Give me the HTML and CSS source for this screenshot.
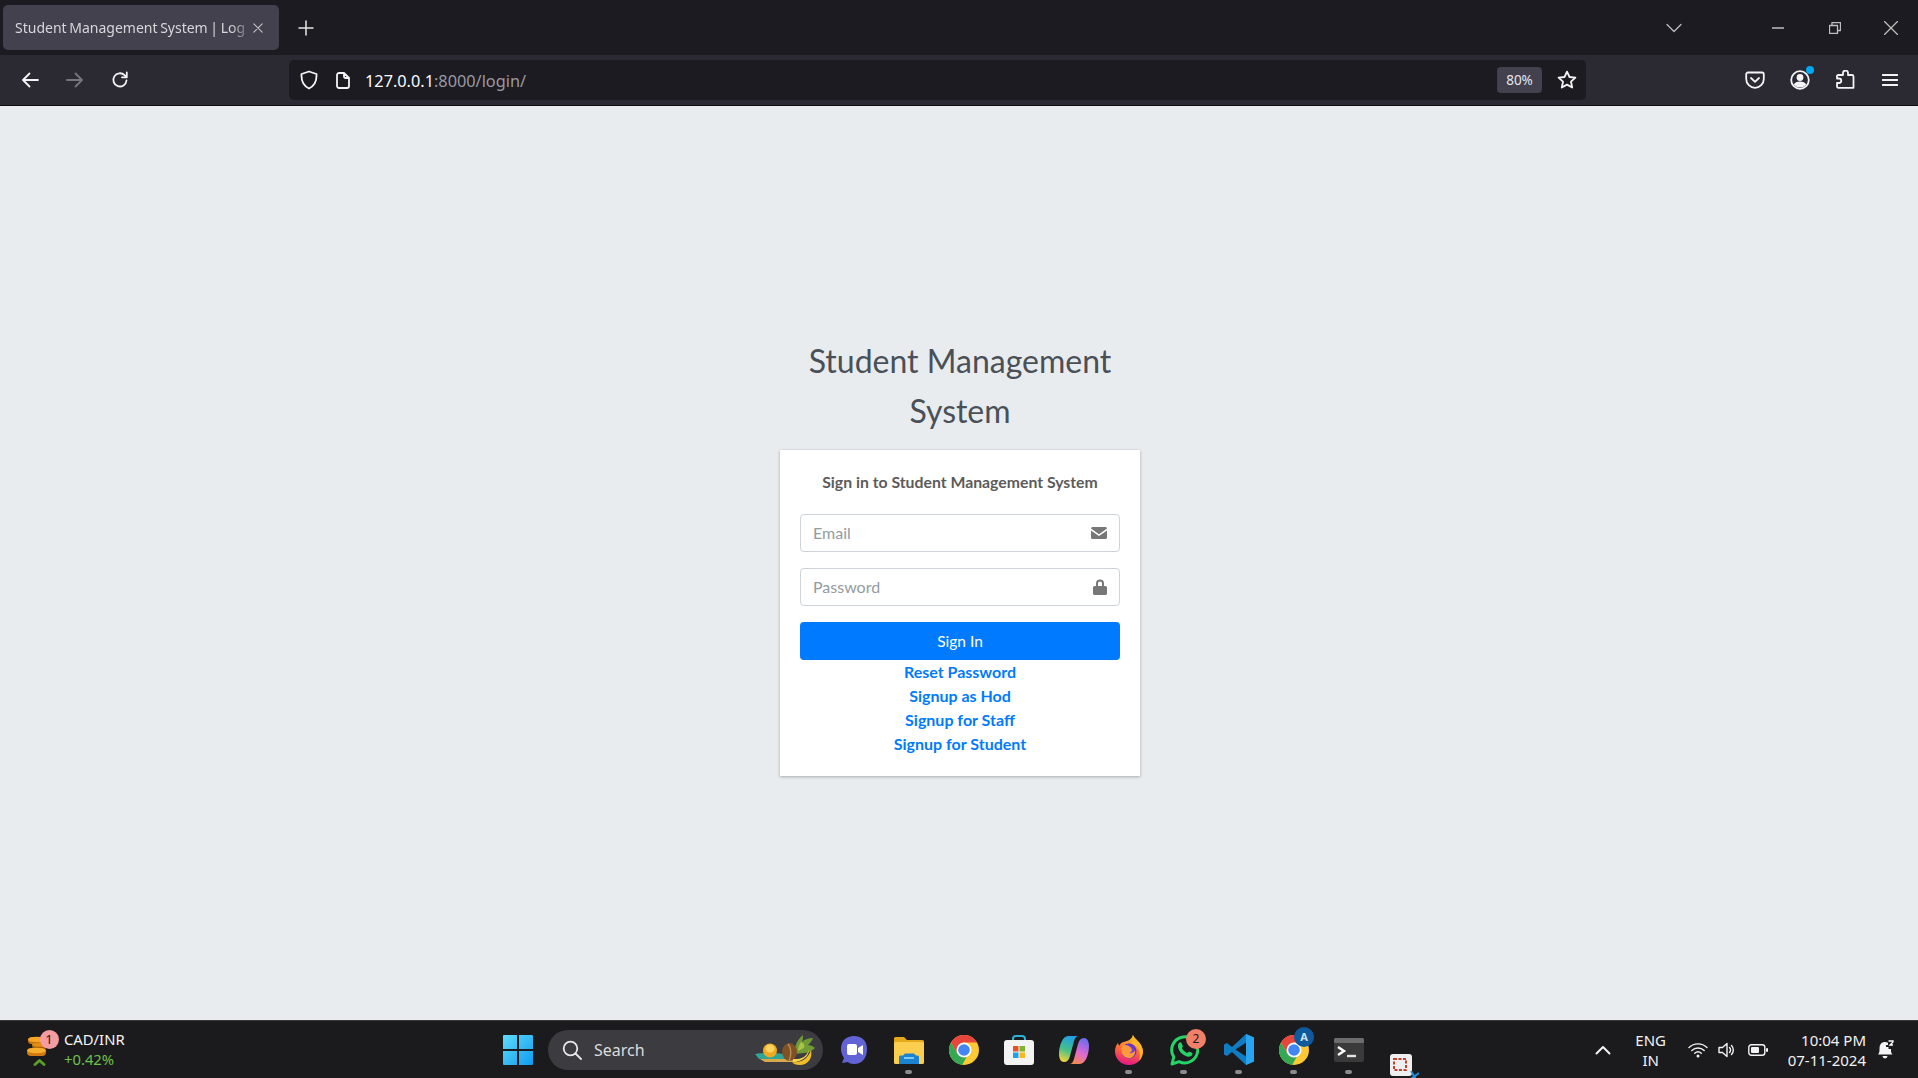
FILE: index.html
```html
<!DOCTYPE html>
<html lang="en">
<head>
<meta charset="utf-8">
<title>Student Management System | Log in</title>
<link rel="stylesheet" href="styles.css">
</head>
<body>
<header class="browser">
  <div class="tabbar">
    <div class="tab">
      <span class="tab-title">Student Management System | Log</span>
      <svg class="tab-close" width="10" height="10" viewBox="0 0 12 12"><path d="M1 1l10 10M11 1L1 11" class="s-tab"/></svg>
    </div>
    <svg class="newtab" width="16" height="16" viewBox="0 0 16 16"><path d="M8 1v14M1 8h14" class="s-white"/></svg>
    <div class="spacer"></div>
    <svg class="tablist" width="16" height="10" viewBox="0 0 16 10"><path d="M1 1.500l7 7 7-7" class="s-grey"/></svg>
    <svg class="win-min" width="12" height="2" viewBox="0 0 12 2"><path d="M0 1h12" class="s-grey"/></svg>
    <svg class="win-max" width="12" height="12" viewBox="0 0 12 12"><path d="M.5 3.500h8v8h-8zM3 3.500V.5h8.500v8H8.500" class="s-grey"/></svg>
    <svg class="win-close" width="14" height="14" viewBox="0 0 14 14"><path d="M.5.5l13 13M13.500.5l-13 13" class="s-grey"/></svg>
  </div>
  <div class="toolbar">
    <div class="navbtn"><svg width="18" height="16" viewBox="0 0 18 16"><path d="M17 8H2M8.500 1.500L2 8l6.500 6.500" class="s-nav"/></svg></div>
    <div class="navbtn"><svg width="18" height="16" viewBox="0 0 18 16"><path d="M1 8h15M9.500 1.500L16 8l-6.500 6.500" class="s-dim"/></svg></div>
    <div class="navbtn"><svg width="18" height="18" viewBox="0 0 18 18"><path d="M15.500 9.500A6.600 6.600 0 1 1 13.600 4.200L15.500 6M15.800 1.500V6.300H11" class="s-nav"/></svg></div>
    <div class="urlbar">
      <svg class="shield" width="18" height="20" viewBox="0 0 18 20"><path d="M9 1.500L16.500 4c.4 6.500-1.500 11.500-7.500 14.500C3 15.500 1.100 10.500 1.500 4z" class="s-nav"/></svg>
      <svg class="doc" width="14" height="17" viewBox="0 0 14 17"><path d="M3 1h5l5 5v8a2 2 0 0 1-2 2H3a2 2 0 0 1-2-2V3a2 2 0 0 1 2-2zM8 1v3.500A1.500 1.500 0 0 0 9.500 6H13" class="s-nav"/></svg>
      <span class="url"><span class="url-host">127.0.0.1</span>:8000/login/</span>
      <span class="zoomlevel">80%</span>
      <svg class="star" width="20" height="20" viewBox="0 0 20 20"><path d="M10 1.600l2.500 5.400 5.900.7-4.400 4 1.200 5.800-5.200-2.900-5.200 2.900 1.200-5.800-4.400-4 5.900-.7z" class="s-nav"/></svg>
    </div>
    <div class="tools">
      <div class="toolbtn"><svg width="20" height="18" viewBox="0 0 20 18"><path d="M3 1.500h14a1.800 1.800 0 0 1 1.800 1.800V8A8.800 8.800 0 0 1 1.200 8V3.300A1.800 1.800 0 0 1 3 1.500zM6 7l4 3.800L14 7" class="s-nav"/></svg></div>
      <div class="toolbtn account"><svg width="20" height="20" viewBox="0 0 20 20"><circle cx="10" cy="10" r="8.800" class="s-nav"/><circle cx="10" cy="7.500" r="3.400" class="f-white"/><path d="M3.800 14.500c1-2 3-3 6.200-3s5.200 1 6.200 3c-1.500 2-3.500 3-6.200 3s-4.700-1-6.200-3z" class="f-white"/></svg><span class="account-dot"></span></div>
      <div class="toolbtn"><svg width="20" height="20" viewBox="0 0 20 20"><path d="M8 3.500V3a2.500 2.500 0 0 1 5 0v2h4a1.500 1.500 0 0 1 1.500 1.500v11.300H3.500a1.500 1.500 0 0 1-1.500-1.500V13h2a2 2 0 0 0 0-4.500H2V7a1.500 1.500 0 0 1 1.500-2H8z" class="s-nav"/></svg></div>
      <div class="toolbtn"><svg width="16" height="12" viewBox="0 0 16 12"><path d="M.5 1h15M.5 6h15M.5 11h15" class="s-nav"/></svg></div>
    </div>
  </div>
</header>

<main class="page">
  <div class="login-box">
    <h1 class="login-logo">Student Management System</h1>
    <section class="card">
      <p class="login-msg">Sign in to Student Management System</p>
      <form>
        <label class="field">
          <input class="field-input" type="email" placeholder="Email">
          <svg class="field-icon" width="16" height="12" viewBox="0 0 16 12"><path d="M1.500 0h13A1.500 1.500 0 0 1 16 1.500L8 7.200 0 1.500A1.500 1.500 0 0 1 1.500 0zM0 3.400l8 5.700 8-5.700v7.100a1.500 1.500 0 0 1-1.500 1.500h-13A1.500 1.500 0 0 1 0 10.500z"/></svg>
        </label>
        <label class="field">
          <input class="field-input" type="password" placeholder="Password">
          <svg class="field-icon" width="14" height="16" viewBox="0 0 14 16"><path fill-rule="evenodd" d="M3 7V4.500a4 4 0 0 1 8 0V7h1.500A1.500 1.500 0 0 1 14 8.500v6a1.500 1.500 0 0 1-1.500 1.500h-11A1.500 1.500 0 0 1 0 14.500v-6A1.500 1.500 0 0 1 1.500 7zm2 0h4V4.500a2 2 0 0 0-4 0z"/></svg>
        </label>
        <button class="signin" type="button">Sign In</button>
      </form>
      <nav class="links">
        <a href="#">Reset Password</a>
        <a href="#">Signup as Hod</a>
        <a href="#">Signup for Staff</a>
        <a href="#">Signup for Student</a>
      </nav>
    </section>
  </div>
</main>

<footer class="taskbar">
  <div class="widget">
    <div class="widget-icon">
      <svg width="30" height="40" viewBox="0 0 30 40">
        <rect x="4" y="7" width="18" height="7" rx="3.500" fill="#c8730f"/>
        <ellipse cx="13" cy="9.500" rx="9" ry="2.800" fill="#f6a623"/>
        <rect x="8" y="12" width="15" height="7" rx="3.500" fill="#a95e0a"/>
        <ellipse cx="15.500" cy="14.500" rx="7.500" ry="2.300" fill="#e38c14"/>
        <rect x="3" y="18" width="19" height="8" rx="4" fill="#d07a10"/>
        <ellipse cx="12.500" cy="20.500" rx="9.500" ry="2.800" fill="#f8ae2d"/>
        <path d="M11 34.500l4.500-4 4.500 4" class="s-up"/>
      </svg>
      <span class="widget-badge">1</span>
    </div>
    <div class="widget-text">
      <span class="pair">CAD/INR</span>
      <span class="change">+0.42%</span>
    </div>
  </div>

  <div class="center">
    <svg class="start" width="30" height="30" viewBox="0 0 30 30">
      <defs><linearGradient id="w" x1="0" y1="0" x2="1" y2="1"><stop offset="0" stop-color="#5fdcfa"/><stop offset="1" stop-color="#0f9bef"/></linearGradient></defs>
      <path d="M0 1a1 1 0 0 1 1-1h13v14H0zM16 0h13a1 1 0 0 1 1 1v13H16zM0 16h14v14H1a1 1 0 0 1-1-1zM16 16h14v13a1 1 0 0 1-1 1H16z" fill="url(#w)"/>
    </svg>
    <div class="search">
      <svg width="20" height="20" viewBox="0 0 20 20"><circle cx="8.500" cy="8.500" r="6.800" class="s-search"/><path d="M13.500 13.500L19 19" class="s-search"/></svg>
      <span class="search-label">Search</span>
      <svg class="search-art" width="60" height="30" viewBox="0 0 60 30">
        <path d="M0 19c6-1.500 22-1.500 30 0v5H4z" fill="#2fa597"/>
        <path d="M5 24h38l-2 3H10z" fill="#d9a84a"/>
        <circle cx="15" cy="15.500" r="7" fill="#f0a91f"/>
        <ellipse cx="15" cy="13.500" rx="4.500" ry="4" fill="#f8d45e"/>
        <path d="M40 19C39 10 43 4 48 0c0 3 0 5-1 7 3-3 7-4 11-4-1 3-3 5-5 7 2 0 5 1 7 3-3 3-7 5-11 5z" fill="#6f9a34"/>
        <path d="M46 7c-2 3-3 6-3 9l6-3c1-3 0-5-3-6z" fill="#a8c24a"/>
        <ellipse cx="34.500" cy="17" rx="7.500" ry="9" fill="#7f5126"/>
        <path d="M33 9c3 3 4 11 1 17" fill="none" stroke="#b98a50" stroke-width="1.500"/>
        <path d="M37 27c7 1 16-2 19-12 2 8-3 15-11 15-4 0-7-1-8-3z" fill="#f0bd28"/>
        <path d="M38 24c6 1 13-1 16-9 0 6-7 12-16 12z" fill="#f8d64e"/>
      </svg>
    </div>
    <div class="dock">
      <div class="app"><svg width="30" height="30" viewBox="0 0 30 30"><path d="M15 1c8 0 13 5 13 13 0 9-5 15-13 15-3 0-5-1-6-2l-6 1 2-5c-2-3-3-6-3-9C2 6 7 1 15 1z" fill="#6264d6"/><rect x="8" y="9" width="10" height="11" rx="2" fill="#fff"/><path d="M19 13l5-3v10l-5-3z" fill="#fff"/></svg></div>
      <div class="app running"><svg width="30" height="28" viewBox="0 0 30 28"><path d="M0 2.500A1.500 1.500 0 0 1 1.500 1h8.500l3 3h15.500A1.500 1.500 0 0 1 30 5.500V10H0z" fill="#e3a81c"/><rect y="6" width="30" height="22" rx="1.500" fill="#fbce4f"/><path d="M5 28v-7a1.500 1.500 0 0 1 1.500-1.500H9l2-2h9l2 2h1.500A1.500 1.500 0 0 1 25 21v7z" fill="#1b84d2"/><rect x="10" y="21" width="10" height="2" fill="#7fcaf2"/></svg></div>
      <div class="app"><svg width="30" height="30" viewBox="0 0 30 30"><circle cx="15" cy="15" r="15" fill="#fcc934"/><path d="M15 15L8.500 18.750 2 7.500A15 15 0 0 1 28 7.500H15z" fill="#e8453c"/><path d="M2 7.500A15 15 0 0 0 13.100 29.900L19.500 18.750 15 15 8.500 18.750z" fill="#34a853"/><circle cx="15" cy="15" r="7.500" fill="#fff"/><circle cx="15" cy="15" r="5.800" fill="#4285f4"/></svg></div>
      <div class="app"><svg width="30" height="30" viewBox="0 0 30 30"><path d="M9 6V4a3 3 0 0 1 3-3h6a3 3 0 0 1 3 3v2" fill="none" stroke="#2bb2d6" stroke-width="2"/><rect y="5" width="30" height="25" rx="3" fill="#f3f3f3"/><rect x="9" y="11" width="5.500" height="5.500" fill="#e8502b"/><rect x="15.500" y="11" width="5.500" height="5.500" fill="#7db52d"/><rect x="9" y="17.500" width="5.500" height="5.500" fill="#1ea3e6"/><rect x="15.500" y="17.500" width="5.500" height="5.500" fill="#fbb81a"/></svg></div>
      <div class="app"><svg width="30" height="30" viewBox="0 0 30 30"><defs><linearGradient id="c1" x1=".6" y1="0" x2=".3" y2="1"><stop offset="0" stop-color="#1f9fe8"/><stop offset=".55" stop-color="#45c08a"/><stop offset="1" stop-color="#f3d23a"/></linearGradient><linearGradient id="c2" x1=".7" y1="0" x2=".3" y2="1"><stop offset="0" stop-color="#6a6cf0"/><stop offset=".55" stop-color="#e06ad0"/><stop offset="1" stop-color="#f78a4c"/></linearGradient></defs><path d="M9 1H20C17 1 16 3 15 6L11 21C10 25 8 27 5 27 2 27 0 24 0 19 0 10 4 1 9 1Z" fill="url(#c1)"/><path d="M25 3C28 3 30 6 30 11 30 20 26 29 21 29H10C13 29 14 27 15 24L19 9C20 5 22 3 25 3Z" fill="url(#c2)"/></svg></div>
      <div class="app running"><svg width="28" height="30" viewBox="0 0 28 30"><defs><linearGradient id="ff" x1=".6" y1="0" x2=".4" y2="1"><stop offset="0" stop-color="#ffc525"/><stop offset=".5" stop-color="#ff6a39"/><stop offset="1" stop-color="#e31587"/></linearGradient><radialGradient id="fg"><stop offset="0" stop-color="#9059ff"/><stop offset="1" stop-color="#5a2ec0"/></radialGradient></defs><path d="M18 0c1 4 9 7 10 16 0 8-6 14-14 14S0 24 0 16c0-3 1-6 3-8l1 3c1-2 3-4 5-4 4-1 8-3 9-7z" fill="url(#ff)"/><path d="M18 0c1 4 9 7 10 16 0 4-2 8-4 10 2-6 1-14-7-17-1-3 0-6 1-9z" fill="#ffb527"/><circle cx="14" cy="16" r="7.500" fill="url(#fg)"/><path d="M7 11c3-2 6-1 8 1 3 2 2 5-1 6 4 1 6-2 6-3 1 5-3 9-7 8-6-1-8-7-6-12z" fill="#ff9a3c"/></svg></div>
      <div class="app running">
        <svg width="30" height="32" viewBox="0 0 30 32"><path d="M3 30l1.800-7A13 13 0 1 1 10 27.600z" fill="none" stroke="#25d366" stroke-width="3" stroke-linejoin="round"/><path d="M10 9c1-1 2-1 2.500 0l1.300 3c.2.600 0 1-.8 2-.5.500 2.500 4 5 5 .7 0 1.200-1 2-1.500l3 1.300c.7.500.5 2-.5 3-2.500 2-6 1-10-2.500C9 16 8 11 10 9z" fill="#25d366"/></svg>
        <span class="app-badge wa">2</span>
      </div>
      <div class="app running"><svg width="30" height="31" viewBox="0 0 30 31"><path d="M22 0l8 3.500v24L22 31 8 18 3 22 0 20.500V10.500L3 9l5 4z" fill="#0f7cc4"/><path d="M22 0l8 3.500v24L22 31z" fill="#28a5ee"/><path d="M22 8.500L11.500 15.500 22 22.500z" fill="#1b1b1d"/></svg></div>
      <div class="app running">
        <svg width="30" height="30" viewBox="0 0 30 30"><circle cx="15" cy="15" r="15" fill="#fcc934"/><path d="M15 15L8.500 18.750 2 7.500A15 15 0 0 1 28 7.500H15z" fill="#e8453c"/><path d="M2 7.500A15 15 0 0 0 13.100 29.900L19.500 18.750 15 15 8.500 18.750z" fill="#34a853"/><circle cx="15" cy="15" r="7.500" fill="#fff"/><circle cx="15" cy="15" r="5.800" fill="#4285f4"/></svg>
        <span class="app-badge profile">A</span>
      </div>
      <div class="app running"><svg width="30" height="24" viewBox="0 0 30 24"><rect width="30" height="24" rx="2" fill="#3a3a3a"/><rect width="30" height="5" rx="1.500" fill="#6d6d6d"/><path d="M4 9l6 4-6 4" fill="none" stroke="#fff" stroke-width="2.400"/><path d="M13 18h9" stroke="#e4e4e4" stroke-width="2.400"/></svg></div>
      <div class="app snip"><svg width="32" height="28" viewBox="0 0 32 28"><rect width="22" height="22" rx="3" fill="#efefef"/><rect x="4" y="5" width="12" height="11" fill="none" stroke="#c9402c" stroke-width="2" stroke-dasharray="3 1.500"/><path d="M18 27l11-8M21 17l6 10" stroke="#1f8fe0" stroke-width="2" fill="none"/></svg></div>
    </div>
  </div>

  <div class="tray">
    <svg class="tray-chevron" width="16" height="10" viewBox="0 0 16 10"><path d="M1.500 8.500L8 2l6.500 6.500" class="s-tray"/></svg>
    <div class="lang"><span>ENG</span><span>IN</span></div>
    <svg class="tray-wifi" width="20" height="16" viewBox="0 0 20 16"><path d="M1 5.500a13 13 0 0 1 18 0M3.800 8.500a9 9 0 0 1 12.400 0M6.700 11.300a5 5 0 0 1 6.600 0" class="s-thin"/><circle cx="10" cy="14" r="1.500" class="f-white"/></svg>
    <svg class="tray-vol" width="20" height="16" viewBox="0 0 20 16"><path d="M1 5.500h3.500L9 1.500v13l-4.500-4H1zM11.500 5.500a3.500 3.500 0 0 1 0 5M13.500 3.500a6.500 6.500 0 0 1 0 9" class="s-thin"/></svg>
    <svg class="tray-bat" width="20" height="12" viewBox="0 0 20 12"><rect x=".8" y=".8" width="16" height="10.400" rx="2.500" class="s-thin"/><rect x="3" y="3" width="8" height="6" rx="1" class="f-white"/><rect x="18" y="4" width="2" height="4" rx="1" class="f-white"/></svg>
    <div class="clock"><span>10:04 PM</span><span>07-11-2024</span></div>
    <svg class="tray-bell" width="18" height="20" viewBox="0 0 18 20"><path d="M2 14.500c1.500-1.500 1.500-3 1.500-6C3.500 4 6 2 9 2c1 0 2 .2 3 .8V5H10v2h2.500v2H15v1.500c0 2 .5 3 1.500 4z" class="f-white"/><path d="M6.500 16h5a2.500 2.500 0 0 1-5 0z" class="f-white"/><path d="M12.500 1H17v1l-3 3h3" fill="none" stroke="#fff" stroke-width="1.300"/></svg>
  </div>
</footer>
</body>
</html>
```
FILE: styles.css
```css
* { box-sizing: border-box; }
html, body { margin: 0; height: 100%; }
body {
  display: flex;
  flex-direction: column;
  height: 1078px;
  overflow: hidden;
  font-family: "Noto Sans", sans-serif;
  background: #e9ecef;
}
svg { display: block; flex: none; }

/* stroke helpers */
.s-tab, .s-white, .s-grey, .s-nav, .s-dim, .s-search, .s-tray, .s-thin, .s-up { fill: none; stroke-linecap: round; stroke-linejoin: round; }
.s-tab { stroke: #c4c4c8; stroke-width: 1.300; }
.s-white { stroke: #e6e6e8; stroke-width: 1.500; }
.s-grey { stroke: #bdbdc0; stroke-width: 1.300; }
.s-nav { stroke: #f4f4f6; stroke-width: 1.800; }
.s-dim { stroke: #77767c; stroke-width: 1.800; }
.s-search { stroke: #e8e8ea; stroke-width: 1.800; }
.s-tray { stroke: #f2f2f2; stroke-width: 2; }
.s-thin { stroke: #f2f2f2; stroke-width: 1.400; }
.s-up { stroke: #5c9c28; stroke-width: 3; }
.f-white { fill: #f4f4f6; }

/* browser chrome */
.browser { flex: none; color: #fbfbfe; }
.tabbar {
  height: 55px;
  background: #1c1b22;
  display: flex;
  align-items: center;
  padding: 0 0 0 3px;
}
.tab {
  width: 276px;
  height: 45px;
  border-radius: 5px;
  background: #42414d;
  display: flex;
  align-items: center;
  padding: 0 16px 0 12px;
}
.tab-title {
  flex: 1;
  min-width: 0;
  white-space: nowrap;
  font-size: 14px;
  word-spacing: -1px;
  line-height: 22px;
  padding-top: 1px;
  color: #d7d7db;
  -webkit-mask-image: linear-gradient(to right, #000 93%, rgba(0, 0, 0, .25));
  mask-image: linear-gradient(to right, #000 93%, rgba(0, 0, 0, .25));
}
.tab-close { margin-left: 6px; }
.newtab { margin-left: 19px; }
.spacer { flex: 1; }
.tablist { margin-right: 90px; }
.win-min { margin-right: 45px; }
.win-max { margin-right: 43px; }
.win-close { margin-right: 20px; }

.toolbar {
  height: 51px;
  background: #2b2a33;
  border-bottom: 1px solid #0c0c0d;
  display: flex;
  align-items: center;
  padding: 0 5px 0 7px;
}
.navbtn { width: 45px; display: flex; justify-content: center; }
.urlbar {
  width: 1297px;
  height: 40px;
  margin-left: 147px;
  background: #1c1b22;
  border-radius: 5px;
  display: flex;
  align-items: center;
  padding: 0 9px 0 11px;
}
.doc { margin-left: 18px; }
.url {
  margin-left: 15px;
  flex: 1;
  font-size: 16.300px;
  line-height: 22px;
  padding-top: 1px;
  color: #9a9aa0;
}
.url-host { color: #fbfbfe; }
.zoomlevel {
  width: 45px;
  height: 26px;
  border-radius: 4px;
  background: #42414d;
  color: #e6e6ea;
  font-size: 13.500px;
  line-height: 26px;
  text-align: center;
  margin-right: 15px;
}
.tools { display: flex; margin-left: 146px; }
.toolbtn {
  width: 45px;
  display: flex;
  justify-content: center;
  align-items: center;
  position: relative;
}
.account-dot {
  position: absolute;
  top: -4px;
  right: 8px;
  width: 8px;
  height: 8px;
  border-radius: 50%;
  background: #00a8f0;
}

/* page */
.page {
  flex: 1;
  min-height: 0;
  display: flex;
  justify-content: center;
  padding: 230px 0 0 2px;
}
.login-box { width: 360px; }
.login-logo {
  margin: 0 0 14px;
  font-family: "Lato", sans-serif;
  font-weight: 400;
  font-size: 32px;
  line-height: 50px;
  text-align: center;
  color: #495057;
}
.card {
  background: #fff;
  height: 326px;
  padding: 20px;
  box-shadow: 0 0 1px rgba(0, 0, 0, .125), 0 1px 3px rgba(0, 0, 0, .25);
}
.login-msg {
  margin: 0 0 20px;
  text-align: center;
  font-family: "Lato", sans-serif;
  font-weight: 700;
  font-size: 15.800px;
  line-height: 24px;
  color: #5b5b5b;
}
.field {
  display: block;
  position: relative;
  margin-bottom: 16px;
}
.field-input {
  display: block;
  width: 100%;
  height: 38px;
  border: 1px solid #ced4da;
  border-radius: 4px;
  padding: 0 40px 1px 12px;
  font-family: "Lato", sans-serif;
  font-size: 16px;
  outline: none;
}
.field-input::placeholder { color: #939ba2; opacity: 1; }
.field-icon {
  position: absolute;
  right: 13px;
  top: 50%;
  transform: translateY(-50%);
  fill: #777;
}
.signin {
  display: block;
  width: 100%;
  height: 38px;
  border: 0;
  border-radius: 4px;
  background: #007bff;
  color: #fff;
  font-family: "Lato", sans-serif;
  font-size: 15.500px;
}
.links { display: flex; flex-direction: column; align-items: center; }
.links a {
  font-family: "Lato", sans-serif;
  font-weight: 700;
  font-size: 16px;
  line-height: 24px;
  color: #007bff;
  text-decoration: none;
}

/* taskbar */
.taskbar {
  flex: none;
  height: 58px;
  background: #1b1b1d;
  border-top: 1px solid #3a3a3c;
  display: flex;
  align-items: center;
  position: relative;
  color: #fff;
}
.widget { display: flex; align-items: center; width: 503px; padding-left: 24px; }
.widget-icon { position: relative; width: 40px; height: 40px; }
.widget-badge {
  position: absolute;
  left: 15.500px;
  top: 0;
  width: 19px;
  height: 19px;
  border-radius: 50%;
  background: #f59ca0;
  color: #1b1b1d;
  font-size: 13px;
  line-height: 19px;
  text-align: center;
}
.widget-text { display: flex; flex-direction: column; font-size: 14.800px; line-height: 20px; margin-top: -2px; }
.pair { color: #f4f4f4; }
.change { color: #6cc24a; }

.center { display: flex; align-items: center; }
.search {
  margin-left: 15px;
  width: 275px;
  height: 40px;
  border-radius: 20px;
  background: #3b3b40;
  display: flex;
  align-items: center;
  padding: 0 8px 0 14px;
}
.search-label { flex: 1; margin-left: 12px; font-size: 16px; color: #dcdcde; }
.dock { display: flex; margin-left: 3px; }
.app {
  width: 55px;
  height: 48px;
  display: flex;
  justify-content: center;
  align-items: center;
  position: relative;
}
.app.running::after {
  content: "";
  position: absolute;
  bottom: 0;
  left: 24px;
  width: 7px;
  height: 4px;
  border-radius: 2px;
  background: #8b8b8e;
}
.app.snip { align-items: flex-end; margin: 8px 0 -8px 2px; }
.app-badge {
  position: absolute;
  width: 20px;
  height: 20px;
  border-radius: 50%;
  font-size: 12px;
  line-height: 20px;
  text-align: center;
}
.app-badge.wa { top: 3px; right: 5px; background: #f28068; color: #1b1b1d; }
.app-badge.profile { top: 1px; right: 7px; background: #0e5a9c; color: #cfe3f5; font-weight: 700; font-size: 11px; }

.tray {
  display: flex;
  align-items: center;
  position: absolute;
  right: 0;
  top: 0;
  bottom: 0;
  padding-right: 24px;
}
.tray-chevron { margin-right: 24px; }
.lang {
  display: flex;
  flex-direction: column;
  align-items: center;
  font-size: 15px;
  line-height: 20px;
  color: #f2f2f2;
  margin-right: 21px;
  width: 32px;
}
.tray-wifi { margin-right: 10px; }
.tray-vol { margin-right: 10px; }
.clock {
  margin-left: 20px;
  display: flex;
  flex-direction: column;
  align-items: flex-end;
  font-size: 15px;
  line-height: 20px;
  color: #f2f2f2;
}
.tray-bell { margin-left: 10px; }
```
